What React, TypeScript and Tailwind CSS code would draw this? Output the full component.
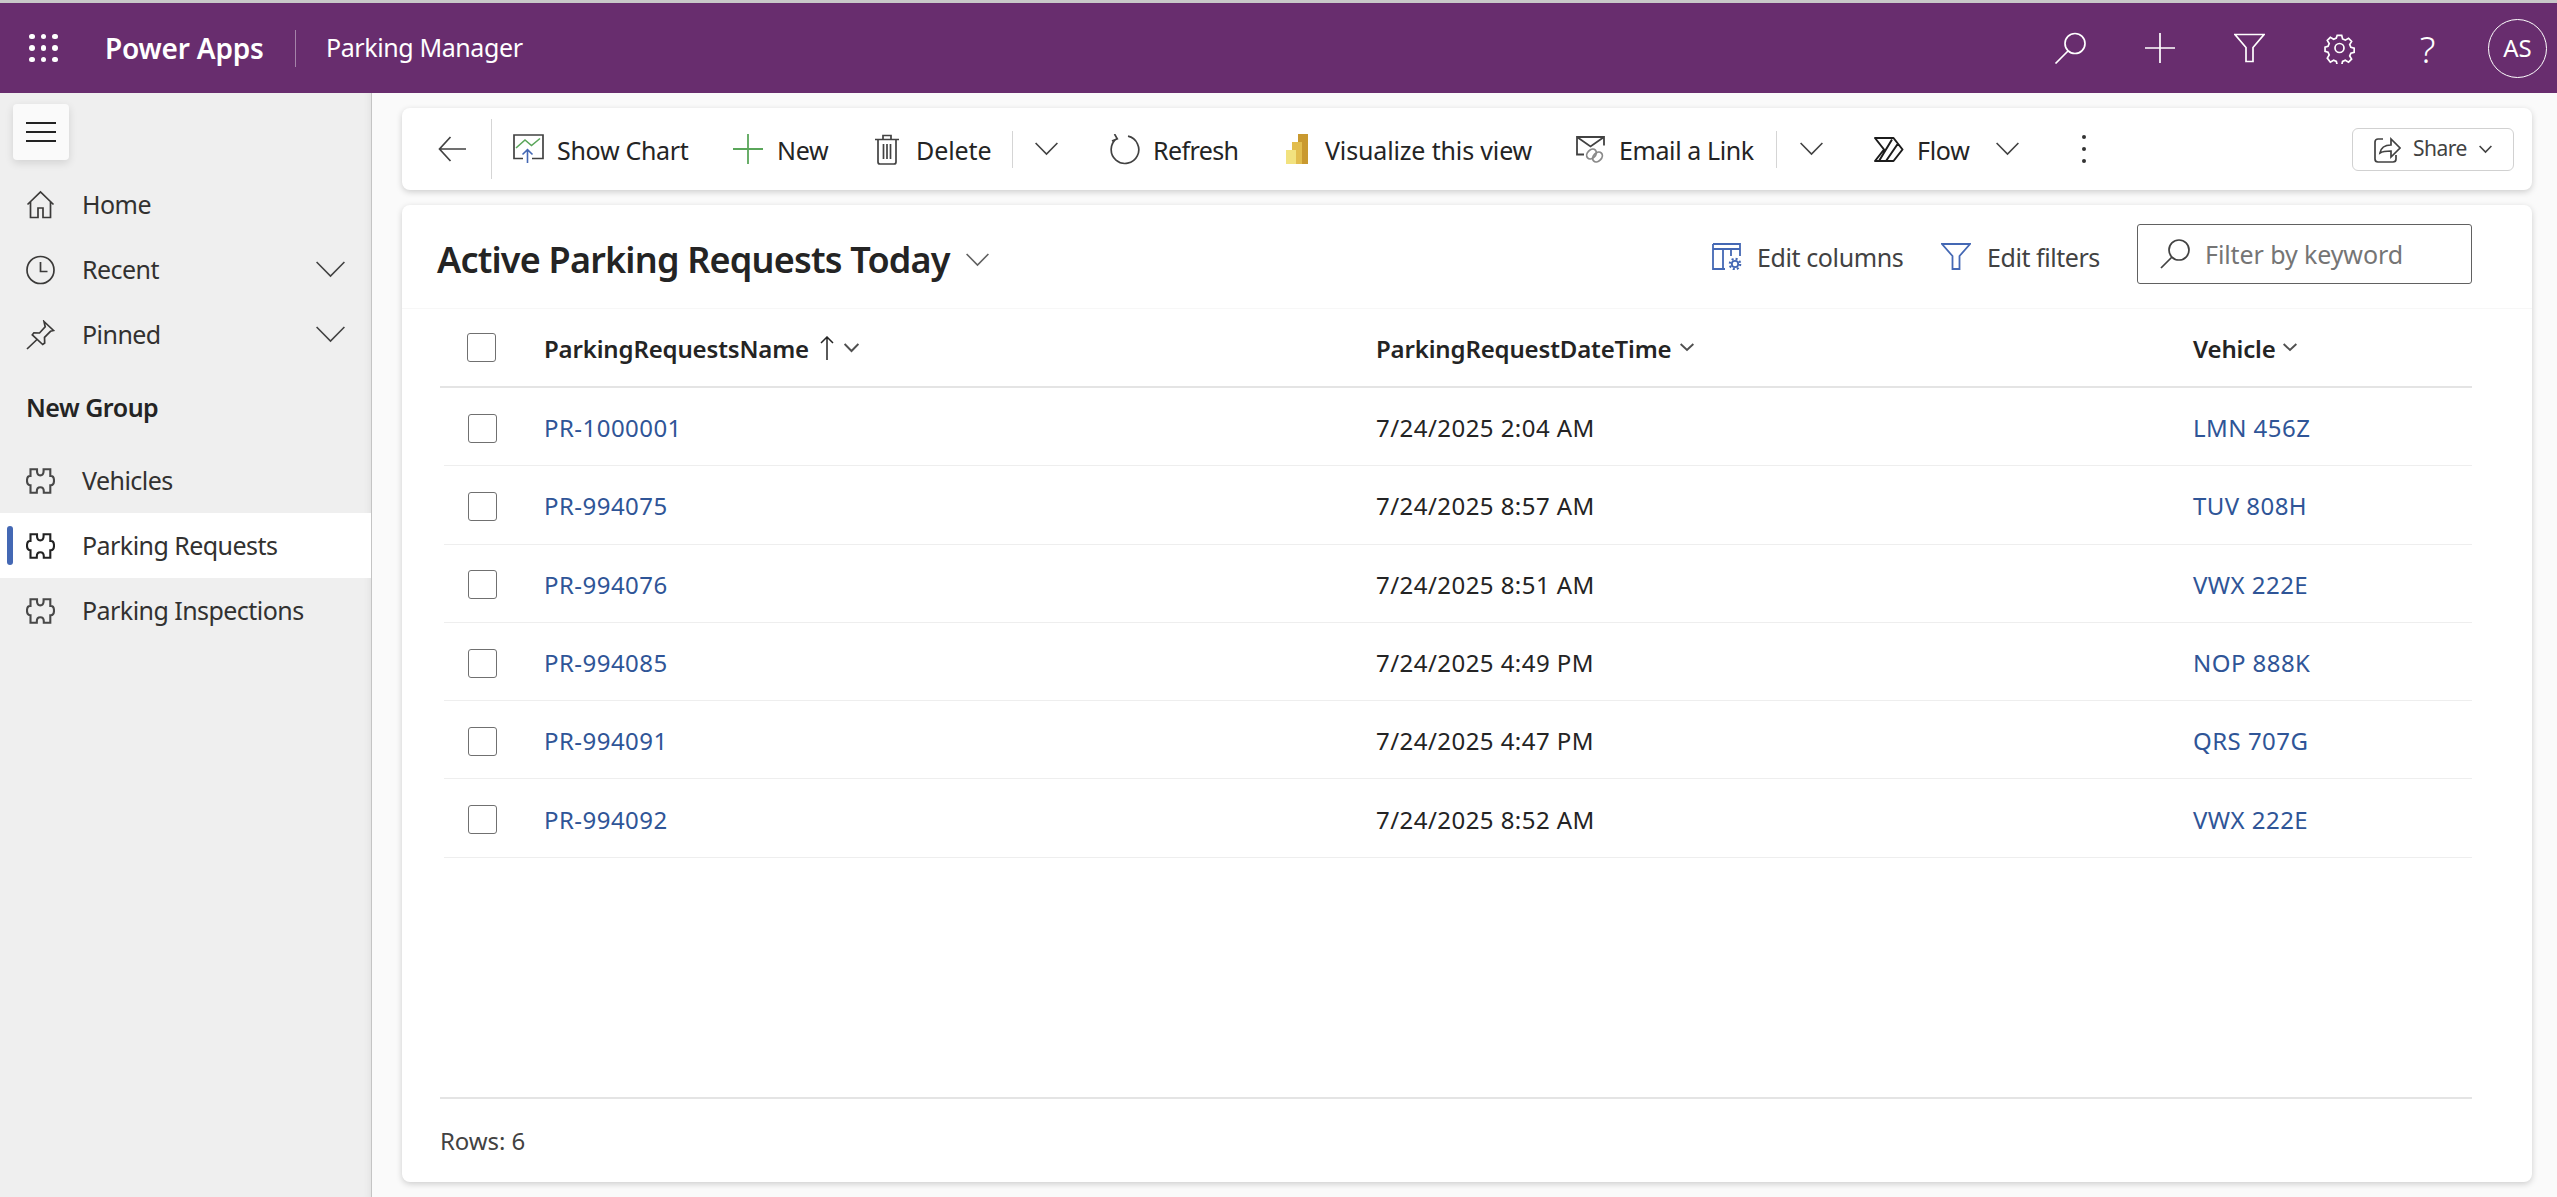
import type { ReactNode } from "react";

const rows = [
  { name: "PR-1000001", date: "7/24/2025 2:04 AM", vehicle: "LMN 456Z" },
  { name: "PR-994075", date: "7/24/2025 8:57 AM", vehicle: "TUV 808H" },
  { name: "PR-994076", date: "7/24/2025 8:51 AM", vehicle: "VWX 222E" },
  { name: "PR-994085", date: "7/24/2025 4:49 PM", vehicle: "NOP 888K" },
  { name: "PR-994091", date: "7/24/2025 4:47 PM", vehicle: "QRS 707G" },
  { name: "PR-994092", date: "7/24/2025 8:52 AM", vehicle: "VWX 222E" },
];

function Ico({ w, h, className, children }: { w: number; h: number; className?: string; children: ReactNode }) {
  return (
    <svg width={w} height={h} viewBox={`0 0 ${w} ${h}`} fill="none" stroke="currentColor" strokeWidth="1.7" className={`shrink-0 ${className ?? ""}`}>
      {children}
    </svg>
  );
}

function Chevron({ w = 23, h = 12, sw = 1.6, className }: { w?: number; h?: number; sw?: number; className?: string }) {
  return (
    <svg width={w} height={h + 2} viewBox={`0 0 ${w} ${h + 2}`} fill="none" stroke="currentColor" strokeWidth={sw} className={`shrink-0 ${className ?? ""}`}>
      <path d={`M0.6 1L${w / 2} ${h}L${w - 0.6} 1`} />
    </svg>
  );
}

function Puzzle({ dark }: { dark?: boolean }) {
  return (
    <svg width="29" height="26" viewBox="0 0 29 26" fill="none" stroke={dark ? "#222222" : "#484848"} strokeWidth="2.1" className="my-[2px] shrink-0">
      <path d="M4.5 1.2H11V3C11 5.6 12.2 7.4 14.3 7.4S17.6 5.6 17.6 3V1.2H24.3V8H25C27 8 28 10 28 12.6S27 17.2 25 17.2H24.3V24.8H17.8V23.4C17.8 20.8 16.4 19.2 14.3 19.2S10.8 20.8 10.8 23.4V24.8H4.5V17.2H4C2 17.2 1 15.2 1 12.6S2 8 4 8H4.5Z" />
    </svg>
  );
}

function SideItem({ icon, label, chevron, active }: { icon: ReactNode; label: string; chevron?: boolean; active?: boolean }) {
  return (
    <div className={`relative flex h-[65px] items-center pl-[26px] pr-[26px] ${active ? "bg-white" : ""}`}>
      {active && <span className="absolute left-[7px] top-[13px] h-[39px] w-[6px] rounded-sm bg-[#4468b4]" />}
      {icon}
      <span className="ml-[27px] text-[25px] tracking-[-0.55px] text-[#323130]">{label}</span>
      {chevron && <Chevron w={29} h={15} className="ml-auto text-[#424242]" />}
    </div>
  );
}

function Sidebar() {
  return (
    <aside className="flex w-[372px] shrink-0 flex-col border-r border-[#c4c4c4] bg-[#efefef] shadow-[inset_-8px_0_8px_-8px_rgba(0,0,0,0.08)]">
      <div className="mt-[11px] ml-[13px] flex h-[56px] w-[56px] items-center justify-center rounded bg-[#fafafa] shadow-[0_3px_8px_rgba(0,0,0,0.12)]">
        <div className="flex w-[30px] flex-col gap-[7px]">
          <span className="h-[2px] bg-[#222]" />
          <span className="h-[2px] bg-[#222]" />
          <span className="h-[2px] bg-[#222]" />
        </div>
      </div>
      <div className="mt-[12px]">
        <SideItem
          label="Home"
          icon={
            <Ico w={29} h={30} className="text-[#3b3a39]">
              <path d="M1.5 14.5L14.5 2l13 12.5M4.5 12v15.5h7.5v-9.5h5v9.5h7.5V12" />
            </Ico>
          }
        />
        <SideItem
          label="Recent"
          chevron
          icon={
            <Ico w={29} h={30} className="text-[#3b3a39]">
              <circle cx="14.5" cy="15" r="13.5" />
              <path d="M14.5 7v9.5h7" />
            </Ico>
          }
        />
        <SideItem
          label="Pinned"
          chevron
          icon={
            <Ico w={29} h={30} className="text-[#3b3a39]">
              <path d="M18 1.5l9.5 9-3 .8-6 6 .2 5.7-2 1.5L6.3 14.8l1.6-2 5.6.2 5.7-6.2zM11 19.5L1 29" />
            </Ico>
          }
        />
      </div>
      <div className="flex h-[81px] items-center pl-[26px] text-[25px] font-semibold tracking-[-0.5px] text-[#242424]">New Group</div>
      <SideItem label="Vehicles" icon={<Puzzle />} />
      <SideItem label="Parking Requests" icon={<Puzzle dark />} active />
      <SideItem label="Parking Inspections" icon={<Puzzle />} />
    </aside>
  );
}

function Header() {
  return (
    <header className="flex h-[90px] items-center bg-[#682d6e] text-white">
      <div className="ml-[29px] grid w-[29px] grid-cols-3 gap-[6px]">
        {Array.from({ length: 9 }).map((_, i) => (
          <span key={i} className="h-[5.6px] w-[5.6px] rounded-full bg-white" />
        ))}
      </div>
      <span className="ml-[47px] w-[160px] whitespace-nowrap text-[28px] font-semibold tracking-[-0.2px]">Power Apps</span>
      <span className="ml-[30px] h-[37px] w-px bg-[#a583a9]" />
      <span className="ml-[30px] whitespace-nowrap text-[25px] tracking-[-0.4px]">Parking Manager</span>
      <div className="ml-auto flex items-center">
        <Ico w={33} h={32} className="mr-[57px]">
          <circle cx="21" cy="11.5" r="10" />
          <path d="M14 19L1.5 31.5" />
        </Ico>
        <Ico w={32} h={32} className="mr-[58px]">
          <path d="M16 1v30M1 16h30" />
        </Ico>
        <Ico w={31} h={30} className="mr-[59px]">
          <path d="M1 1.5h29L19 14.5v14h-7v-14z" />
        </Ico>
        <Ico w={31} h={32} className="mr-[63px]">
          <circle cx="15.5" cy="16" r="4.5" />
          <path d="M13 1.5h5l1 4 3 1.3 3.6-2.1 3.4 3.5-2.1 3.5 1.3 3 3.7 1v4.6l-3.7 1-1.3 3 2.1 3.5-3.4 3.5-3.6-2.1-3 1.3-1 4h-5l-1-4-3-1.3-3.6 2.1L2 26.8l2.1-3.5-1.3-3-3.3-1v-4.6l3.3-1 1.3-3L2 7.2l3.4-3.5L9 5.8l3-1.3z" transform="translate(1.5 2) scale(0.9)" strokeWidth="1.9" />
        </Ico>
        <span className="mr-[51px] w-[19px] text-center text-[37px] font-light leading-none">?</span>
        <div className="mr-[10px] flex h-[59px] w-[59px] items-center justify-center rounded-full border border-white text-[24px]">AS</div>
      </div>
    </header>
  );
}

function Cmd({ icon, label, ml, w, gap = "ml-[13px]", track = "tracking-[-0.3px]" }: { icon: ReactNode; label: string; ml: string; w: string; gap?: string; track?: string }) {
  return (
    <div className={`flex items-center ${ml}`}>
      {icon}
      <span className={`mt-[3px] whitespace-nowrap text-[25px] text-[#242424] ${gap} ${w} ${track}`}>{label}</span>
    </div>
  );
}

function CommandBar() {
  return (
    <div className="flex h-[82px] items-center rounded-lg bg-white pl-[36px] pr-[18px] shadow-[0_2px_6px_rgba(0,0,0,0.18)]">
      <Ico w={28} h={26} className="text-[#424242]">
        <path d="M12.5 1L1.5 13l11 12M1.5 13H28" />
      </Ico>
      <span className="ml-[25px] h-[60px] w-px bg-[#d5d5d5]" />
      <Cmd
        ml="ml-[21px]"
        w="w-[132px]"
        label="Show Chart"
        icon={
          <svg width="31" height="30" viewBox="0 0 31 30" fill="none" className="shrink-0">
            <path d="M10 24.5H1V1h29v23.5H19" stroke="#424242" strokeWidth="1.7" />
            <path d="M3 14l9-8 6.5 5.5L27 4.5" stroke="#5aa65a" strokeWidth="1.6" />
            <path d="M14.5 29V15.7M9.5 20.5l5-4.8 5 4.8" stroke="#4468b4" strokeWidth="1.6" />
          </svg>
        }
      />
      <Cmd
        ml="ml-[44px]"
        w="w-[51px]"
        gap="ml-[14px]"
        label="New"
        icon={
          <svg width="30" height="30" viewBox="0 0 30 30" fill="none" className="shrink-0">
            <path d="M15 0v30M0 15h30" stroke="#5aa65a" strokeWidth="1.8" />
          </svg>
        }
      />
      <Cmd
        ml="ml-[46px]"
        w="w-[74px]"
        gap="ml-[16px]"
        track="tracking-[-0.1px]"
        label="Delete"
        icon={
          <Ico w={26} h={31} className="text-[#424242]">
            <path d="M1 5.5h24M4 5.5V28a2 2 0 0 0 2 2h14a2 2 0 0 0 2-2V5.5M9 5V1.5h8V5M9.5 10v15M13 10v15M16.5 10v15" />
          </Ico>
        }
      />
      <span className="ml-[22px] h-[37px] w-px bg-[#d5d5d5]" />
      <Chevron className="ml-[22px] text-[#424242]" />
      <Cmd
        ml="ml-[51px]"
        w="w-[84px]"
        track="tracking-[-0.6px]"
        label="Refresh"
        icon={
          <Ico w={31} h={31} className="text-[#424242]">
            <path d="M19 2.2a13.8 13.8 0 1 1-11 2.2M5.5 0l2.8 4.8L3 7" />
          </Ico>
        }
      />
      <Cmd
        ml="ml-[49px]"
        w="w-[206px]"
        gap="ml-[17px]"
        track="tracking-[-0.15px]"
        label="Visualize this view"
        icon={
          <svg width="22" height="30" viewBox="0 0 22 30" className="shrink-0">
            <rect x="12" width="10" height="30" fill="#c9992f" />
            <rect x="6" y="8" width="10" height="22" fill="#e2bd4e" />
            <rect y="16" width="10" height="14" fill="#f2e27f" />
          </svg>
        }
      />
      <Cmd
        ml="ml-[45px]"
        w="w-[134px]"
        track="tracking-[-0.4px]"
        label="Email a Link"
        icon={
          <svg width="30" height="27" viewBox="0 0 30 27" fill="none" className="shrink-0">
            <path d="M8 18.5H1V1h27v8.5M1 1l13.5 9.5L28 1" stroke="#424242" strokeWidth="1.8" />
            <ellipse cx="15.5" cy="18" rx="4" ry="5.5" stroke="#8a8a8a" strokeWidth="1.8" transform="rotate(45 15.5 18)" />
            <ellipse cx="21.5" cy="21" rx="4" ry="5.5" stroke="#8a8a8a" strokeWidth="1.8" transform="rotate(45 21.5 21)" />
          </svg>
        }
      />
      <span className="ml-[23px] h-[37px] w-px bg-[#d5d5d5]" />
      <Chevron className="ml-[23px] text-[#424242]" />
      <Cmd
        ml="ml-[51px]"
        w="w-[52px]"
        label="Flow"
        icon={
          <Ico w={30} h={25} className="text-[#1c1c1c]">
            <path d="M1 1H19.5L28.5 12.5L19.5 24H1L10 12.5ZM18 2.5L5 24M24 6.5L12 24" strokeWidth="2" strokeLinejoin="round" />
          </Ico>
        }
      />
      <Chevron className="ml-[27px] text-[#424242]" />
      <div className="ml-[63px] flex flex-col gap-[8px]">
        <span className="h-[4px] w-[4px] rounded-full bg-[#333]" />
        <span className="h-[4px] w-[4px] rounded-full bg-[#333]" />
        <span className="h-[4px] w-[4px] rounded-full bg-[#333]" />
      </div>
      <div className="ml-auto flex h-[43px] w-[162px] items-center rounded-md border border-[#d1d1d1] pl-[20px]">
        <Ico w={28} h={28} className="text-[#424242]">
          <path d="M10 4H5a3 3 0 0 0-3 3v17a3 3 0 0 0 3 3h15a3 3 0 0 0 3-3v-4M7 18c1-6 6-8 11-8V4l9 9-9 9v-6c-4 0-8 0-11 2z" />
        </Ico>
        <span className="ml-[12px] text-[21px] tracking-[-0.5px] text-[#424242]">Share</span>
        <Chevron w={13} h={7} className="ml-[12px] text-[#424242]" />
      </div>
    </div>
  );
}

function Checkbox() {
  return <span className="block h-[29px] w-[29px] shrink-0 rounded-[3px] border border-[#707070] bg-white" />;
}

function Grid() {
  return (
    <div className="flex min-h-0 flex-1 flex-col">
      <div className="ml-[38px] mr-[60px] flex h-[79px] items-center border-b-2 border-[#e4e4e4] pl-[27px] text-[24px] font-semibold tracking-[-0.15px] text-[#242424]">
        <Checkbox />
        <div className="ml-[48px] flex w-[832px] items-center">
          <span className="mt-[3px] w-[265px] whitespace-nowrap">ParkingRequestsName</span>
          <svg width="14" height="24" viewBox="0 0 14 24" fill="none" stroke="#242424" strokeWidth="1.5" className="ml-[11px]">
            <path d="M7 24V1M1 7l6-6 6 6" />
          </svg>
          <Chevron w={15} h={8} sw={2} className="ml-[10px] text-[#505050]" />
        </div>
        <div className="flex w-[817px] items-center">
          <span className="mt-[3px] w-[297px] whitespace-nowrap">ParkingRequestDateTime</span>
          <Chevron w={14} h={7} sw={2} className="ml-[7px] text-[#505050]" />
        </div>
        <div className="flex items-center">
          <span className="mt-[3px] w-[83px]">Vehicle</span>
          <Chevron w={14} h={7} sw={2} className="ml-[7px] text-[#505050]" />
        </div>
      </div>
      {rows.map((r) => (
        <div key={r.name} className="ml-[42px] mr-[60px] flex h-[78.3px] items-center border-b border-[#eeeeee] pl-[24px] pt-[3px] text-[24px] tracking-[0.45px]">
          <Checkbox />
          <a className="ml-[47px] w-[832px] text-[#2f5597]">{r.name}</a>
          <span className="w-[817px] text-[#242424]">{r.date}</span>
          <a className="text-[#2f5597]">{r.vehicle}</a>
        </div>
      ))}
      <div className="mt-auto ml-[38px] mr-[60px] flex h-[85px] items-center border-t-2 border-[#e4e4e4] text-[24px] tracking-[-0.1px] text-[#424242]">Rows: 6</div>
    </div>
  );
}

function MainCard() {
  return (
    <div className="mt-[15px] flex h-[977px] flex-col rounded-lg bg-white shadow-[0_2px_6px_rgba(0,0,0,0.18)]">
      <div className="flex h-[104px] shrink-0 items-center border-b border-[#f7f7f7] pl-[35px] pr-[60px]">
        <h1 className="mt-[6px] w-[514px] whitespace-nowrap text-[36px] font-semibold tracking-[-0.8px] text-[#242424]">Active Parking Requests Today</h1>
        <Chevron className="ml-[15px] mt-[6px] text-[#616161]" />
        <div className="ml-auto flex items-center">
          <svg width="30" height="27" viewBox="0 0 30 27" fill="none" stroke="#4468b4" strokeWidth="1.8" className="shrink-0">
            <path d="M1 1h27v12M1 6h27M1 1v25h12M11 6v20M19 6v7" />
            <circle cx="23" cy="21" r="3.2" />
            <circle cx="23" cy="21" r="5.2" strokeWidth="2.2" strokeDasharray="2 2.08" />
          </svg>
          <span className="ml-[15px] mt-[2px] w-[147px] whitespace-nowrap text-[25px] tracking-[-0.4px] text-[#424242]">Edit columns</span>
          <svg width="30" height="27" viewBox="0 0 30 27" fill="none" stroke="#4468b4" strokeWidth="1.8" className="ml-[37px] shrink-0">
            <path d="M1 1h28L18.5 13v13h-7V13z" />
          </svg>
          <span className="ml-[16px] mt-[2px] w-[113px] whitespace-nowrap text-[25px] tracking-[-0.45px] text-[#424242]">Edit filters</span>
          <div className="mb-[6px] ml-[37px] flex h-[60px] w-[335px] items-center rounded-[3px] border border-[#616161] pl-[22px]">
            <Ico w={30} h={30} className="text-[#424242]">
              <circle cx="19" cy="11" r="10" />
              <path d="M12 18L1 29" />
            </Ico>
            <span className="ml-[15px] mt-[2px] whitespace-nowrap text-[25px] tracking-[-0.1px] text-[#757575]">Filter by keyword</span>
          </div>
        </div>
      </div>
      <Grid />
    </div>
  );
}

export default function App() {
  return (
    <div className="flex h-[1197px] flex-col overflow-hidden bg-[#fafafa] font-['Noto_Sans','Open_Sans',sans-serif]">
      <div className="h-[3px] shrink-0 bg-[#c8c8c8]" />
      <Header />
      <div className="flex min-h-0 flex-1">
        <Sidebar />
        <main className="min-w-0 flex-1 pl-[30px] pr-[25px] pt-[15px]">
          <CommandBar />
          <MainCard />
        </main>
      </div>
    </div>
  );
}
